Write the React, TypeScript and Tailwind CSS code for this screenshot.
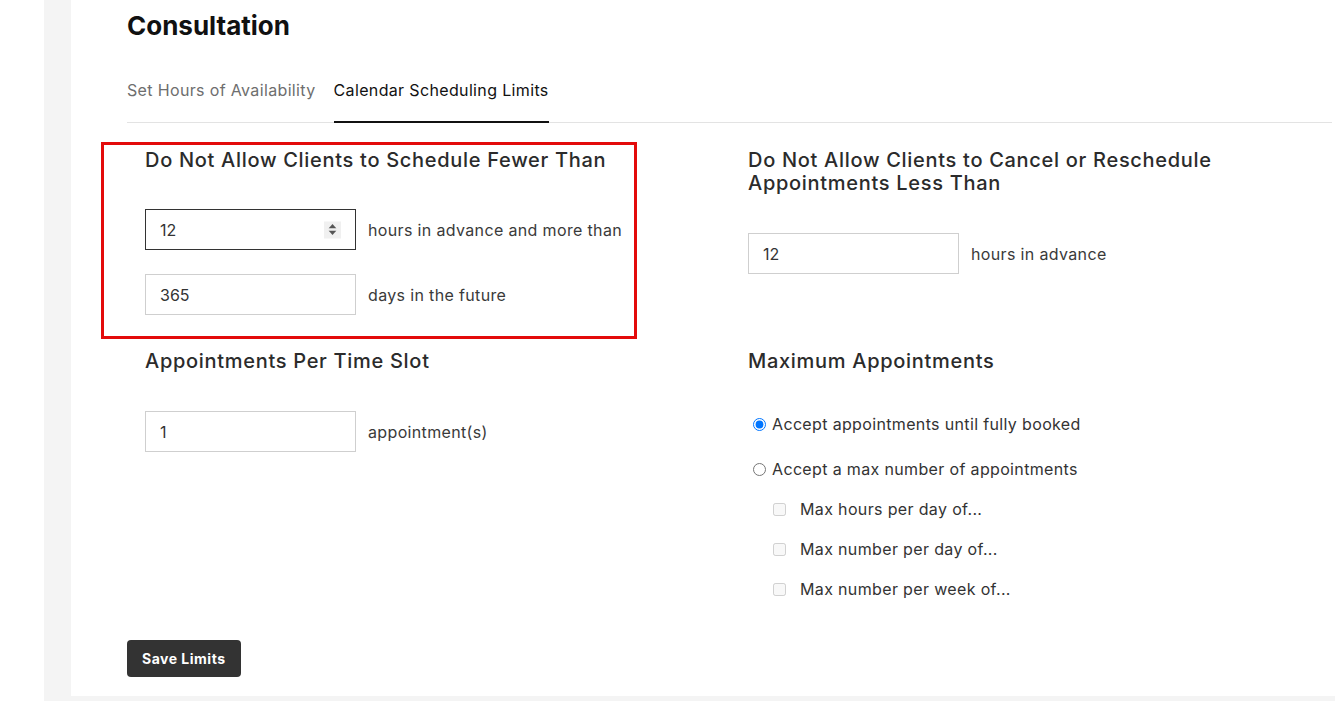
import React from "react";

const font = { fontFamily: "Inter, 'Liberation Sans', sans-serif" };

function Spinner() {
  return (
    <span className="absolute right-[14px] top-1/2 -translate-y-1/2 w-[17px] h-[17px] bg-[#f0f0f0] flex flex-col items-center justify-center gap-[2px]">
      <svg width="9" height="5" viewBox="0 0 9 5"><path d="M0.5 5 L4.5 0.5 L8.5 5 Z" fill="#555" /></svg>
      <svg width="9" height="5" viewBox="0 0 9 5"><path d="M0.5 0 L4.5 4.5 L8.5 0 Z" fill="#555" /></svg>
    </span>
  );
}

function NumField({ value, label, focused }: { value: string; label: string; focused?: boolean }) {
  return (
    <div className="flex items-center">
      <div
        className={
          "relative w-[211px] h-[41px] flex items-center pl-[14px] text-[16px] text-[#333] bg-white " +
          (focused ? "border border-[#333]" : "border border-[#cfcfcf]")
        }
      >
        {value}
        {focused && <Spinner />}
      </div>
      <span className="ml-[12px] text-[16px] tracking-[0.35px] text-[#3a3a3a]">{label}</span>
    </div>
  );
}

export default function App() {
  return (
    <div style={font} className="w-full h-[701px] bg-white pl-[44px] overflow-hidden">
      <div className="h-full bg-[#f4f4f4] pl-[27px] pb-[5px]">
        <div className="h-full bg-white pl-[56px] pr-[3px] pt-[10px]">
          <h1 className="text-[26px] leading-[32px] font-bold text-[#111]">Consultation</h1>
          <div className="mt-[38px] flex gap-[18px] border-b border-[#e3e3e3] text-[16px] leading-[20px] tracking-[0.35px]">
            <div className="pb-[22px] text-[#6e6e6e]">Set Hours of Availability</div>
            <div className="pb-[21px] text-[#111] border-b-[2px] border-[#111] -mb-px">Calendar Scheduling Limits</div>
          </div>

          <div className="ml-[18px] grid grid-cols-[603px_1fr] mt-[23px]">
            <div className="relative pt-[2px] pb-[29px]">
              <div className="absolute left-[-44px] top-[-4px] w-[536px] h-[197px] border-[3px] border-[#e30b0b] pointer-events-none" />
              <h2 className="text-[20px] leading-[24px] font-medium text-[#2b2b2b] tracking-[0.7px]">
                Do Not Allow Clients to Schedule Fewer Than
              </h2>
              <div className="mt-[37px] flex flex-col gap-[24px]">
                <NumField value="12" label="hours in advance and more than" focused />
                <NumField value="365" label="days in the future" />
              </div>
            </div>
            <div className="pt-[3px]">
              <h2 className="text-[20px] leading-[23px] font-medium text-[#2b2b2b] tracking-[0.7px] w-[520px]">
                Do Not Allow Clients to Cancel or Reschedule Appointments Less Than
              </h2>
              <div className="mt-[38px]">
                <NumField value="12" label="hours in advance" />
              </div>
            </div>

            <div className="pt-[5px]">
              <h2 className="text-[20px] leading-[24px] font-medium text-[#2b2b2b] tracking-[0.7px]">
                Appointments Per Time Slot
              </h2>
              <div className="mt-[38px]">
                <NumField value="1" label="appointment(s)" />
              </div>
            </div>
            <div className="pt-[5px]">
              <h2 className="text-[20px] leading-[24px] font-medium text-[#2b2b2b] tracking-[0.7px]">
                Maximum Appointments
              </h2>
              <div className="mt-[41px] flex flex-col text-[16px] tracking-[0.35px] text-[#333]">
                <label className="flex items-center h-[20px]">
                  <input type="radio" name="max" defaultChecked className="ml-[5px] mr-[4px] w-[13px] h-[13px] m-0" />
                  <span className="ml-[2px]">Accept appointments until fully booked</span>
                </label>
                <label className="flex items-center h-[20px] mt-[25px]">
                  <input type="radio" name="max" className="ml-[5px] mr-[4px] w-[13px] h-[13px] m-0" />
                  <span className="ml-[2px]">Accept a max number of appointments</span>
                </label>
                <div className="flex flex-col gap-[20px] mt-[20px] pl-[25px]">
                  {["Max hours per day of...", "Max number per day of...", "Max number per week of..."].map((t) => (
                    <label key={t} className="flex items-center h-[20px]">
                      <input type="checkbox" disabled className="w-[13px] h-[13px] m-0" />
                      <span className="ml-[14px]">{t}</span>
                    </label>
                  ))}
                </div>
              </div>
            </div>
          </div>

          <button className="mt-[41px] h-[37px] px-[15px] bg-[#333] text-white text-[14px] tracking-[0.5px] font-bold rounded-[4px]">
            Save Limits
          </button>
        </div>
      </div>
    </div>
  );
}
